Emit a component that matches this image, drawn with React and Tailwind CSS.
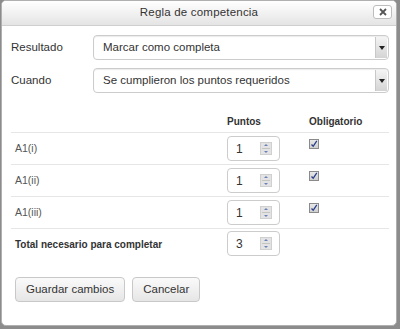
import React from 'react';

const font = { fontFamily: '"Liberation Sans", Arial, sans-serif' };

function SelectBox({ value }) {
  return (
    <div className="flex-1 h-[25px] flex items-center border border-[#cccccc] rounded-[4px] bg-white shadow-[inset_0_1px_1px_rgba(0,0,0,0.08)] relative">
      <span className="pl-[9px] text-[11.5px] text-[#333]">{value}</span>
      <div className="absolute right-[1px] top-[1px] bottom-[1px] w-[12px] bg-gradient-to-b from-[#f4f4f4] to-[#d4d4d4] border-l border-[#c8c8c8] flex items-center justify-center">
        <div className="w-0 h-0 border-l-[3px] border-r-[3px] border-t-[4px] border-l-transparent border-r-transparent border-t-[#222]" />
      </div>
    </div>
  );
}

function Spinner({ value }) {
  return (
    <div className="w-[53px] h-[25px] flex items-center border border-[#cccccc] rounded-[4px] bg-white">
      <span className="pl-[8px] text-[12px] text-[#333] flex-1">{value}</span>
      <div className="w-[12px] h-[13px] mr-[7px] bg-[#e3e3e3] border border-[#d0d0d0] flex flex-col items-center justify-center gap-[2px]">
        <div className="w-0 h-0 border-l-[2px] border-r-[2px] border-b-[2px] border-l-transparent border-r-transparent border-b-[#6a82b8]" />
        <div className="w-[8px] h-px bg-[#c4c4c4]" />
        <div className="w-0 h-0 border-l-[2px] border-r-[2px] border-t-[2px] border-l-transparent border-r-transparent border-t-[#6a82b8]" />
      </div>
    </div>
  );
}

function Check() {
  return (
    <div className="w-[10px] h-[10px] border border-[#8a8a8a] bg-gradient-to-b from-[#e8e8e8] to-[#cfcfcf] flex items-center justify-center">
      <svg width="8" height="8" viewBox="0 0 8 8">
        <path d="M1.5 4.5 L3.2 6.3 L6.8 0.8" stroke="#2a3f8a" strokeWidth="1.3" fill="none" />
      </svg>
    </div>
  );
}

const rows = [
  { name: 'A1(i)', value: '1' },
  { name: 'A1(ii)', value: '1' },
  { name: 'A1(iii)', value: '1' },
];

export default function App() {
  return (
    <div className="w-[400px] h-[329px] bg-[#8c8c8c] pl-[1px]" style={font}>
      <div className="w-[396px] h-[326px] bg-white rounded-[5px] border border-[#b0b0b0] overflow-hidden flex flex-col">
        <div className="h-[25px] shrink-0 bg-gradient-to-b from-white to-[#e4e4e4] border-b border-[#cfcfcf] flex items-center justify-center relative">
          <span className="text-[11.5px] tracking-[0.2px] text-[#333]">Regla de competencia</span>
          <div className="absolute right-[4px] top-[4px] w-[19px] h-[14px] bg-white border border-[#bdbdbd] rounded-[3px] flex items-center justify-center">
            <svg width="8" height="8" viewBox="0 0 8 8">
              <path d="M1 1 L7 7 M7 1 L1 7" stroke="#555" strokeWidth="1.8" />
            </svg>
          </div>
        </div>

        <div className="pl-[9px] pr-[7px] pt-[9px] flex flex-col">
          <div className="flex items-center h-[25px]">
            <span className="w-[82px] text-[11.5px] text-[#333]">Resultado</span>
            <SelectBox value="Marcar como completa" />
          </div>
          <div className="flex items-center h-[25px] mt-[8px]">
            <span className="w-[82px] text-[11.5px] text-[#333]">Cuando</span>
            <SelectBox value="Se cumplieron los puntos requeridos" />
          </div>

          <div className="mt-[17px] flex items-center h-[23px] border-b border-[#e6e6e6]">
            <span className="w-[216px]" />
            <span className="w-[82px] text-[10px] font-bold text-[#333]">Puntos</span>
            <span className="text-[10px] font-bold text-[#333]">Obligatorio</span>
          </div>

          {rows.map((r) => (
            <div key={r.name} className="flex h-[32px] pt-[3px] border-b border-[#e6e6e6]">
              <span className="w-[216px] pl-[4px] pt-[5px] text-[10.5px] text-[#555]">{r.name}</span>
              <div className="w-[82px]">
                <Spinner value={r.value} />
              </div>
              <div className="pt-[3px]">
                <Check />
              </div>
            </div>
          ))}

          <div className="flex h-[30px] pt-[2px]">
            <span className="w-[216px] pl-[4px] pt-[6px] text-[10px] font-bold text-[#333]">Total necesario para completar</span>
            <Spinner value="3" />
          </div>

          <div className="flex gap-[7px] mt-[18px] pl-[4px]">
            <button className="h-[25px] px-[10px] text-[11.5px] text-[#333] border border-[#c8c8c8] rounded-[4px] bg-gradient-to-b from-[#fafafa] to-[#e6e6e6]">
              Guardar cambios
            </button>
            <button className="h-[25px] px-[10px] text-[11.5px] text-[#333] border border-[#c8c8c8] rounded-[4px] bg-gradient-to-b from-[#fafafa] to-[#e6e6e6]">
              Cancelar
            </button>
          </div>
        </div>
      </div>
    </div>
  );
}
